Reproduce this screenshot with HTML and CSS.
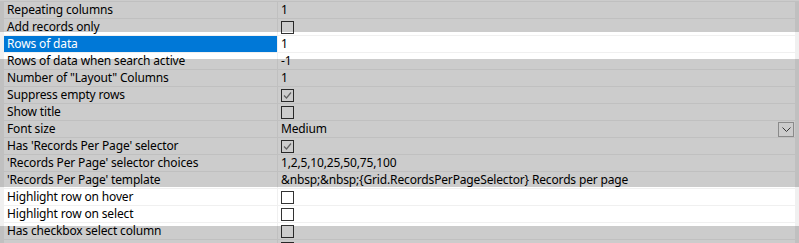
FILE: index.html
```html
<!DOCTYPE html>
<html lang="en">
<head>
  <meta charset="UTF-8" />
  <title>Grid properties</title>
  <link rel="stylesheet" href="styles.css">
</head>
<body>
  <div class="grid">
    <div class="row"><div class="name">Repeating columns</div><div class="value">1</div></div>
    <div class="row"><div class="name">Add records only</div><div class="value"><span class="box"></span></div></div>
    <div class="row selected"><div class="name">Rows of data</div><div class="value">1</div></div>
    <div class="row"><div class="name">Rows of data when search active</div><div class="value">-1</div></div>
    <div class="row"><div class="name">Number of "Layout" Columns</div><div class="value">1</div></div>
    <div class="row"><div class="name">Suppress empty rows</div><div class="value">
      <svg class="box checked" width="13" height="13" viewBox="0 0 13 13"><polyline points="3,6.5 5.5,9 10,3.5" fill="none" stroke="#7a7a7a" stroke-width="1.2"/></svg>
    </div></div>
    <div class="row"><div class="name">Show title</div><div class="value"><span class="box"></span></div></div>
    <div class="row"><div class="name">Font size</div><div class="value">Medium
      <span class="drop"><svg width="9" height="5" viewBox="0 0 9 5"><polyline points="0.5,0.5 4.5,4.5 8.5,0.5" fill="none" stroke="#444" stroke-width="1"/></svg></span>
    </div></div>
    <div class="row"><div class="name">Has 'Records Per Page' selector</div><div class="value">
      <svg class="box checked" width="13" height="13" viewBox="0 0 13 13"><polyline points="3,6.5 5.5,9 10,3.5" fill="none" stroke="#7a7a7a" stroke-width="1.2"/></svg>
    </div></div>
    <div class="row"><div class="name">'Records Per Page' selector choices</div><div class="value">1,2,5,10,25,50,75,100</div></div>
    <div class="row"><div class="name">'Records Per Page' template</div><div class="value">&amp;nbsp;&amp;nbsp;{Grid.RecordsPerPageSelector} Records per page</div></div>
    <div class="row"><div class="name">Highlight row on hover</div><div class="value"><span class="box"></span></div></div>
    <div class="row"><div class="name">Highlight row on select</div><div class="value"><span class="box"></span></div></div>
    <div class="row"><div class="name">Has checkbox select column</div><div class="value"><span class="box"></span></div></div>
    <div class="row"><div class="name"></div><div class="value"><span class="box"></span></div></div>
  </div>

  <!-- dimmed areas, the two bright bands stay uncovered -->
  <div class="shade shade-top"></div>
  <div class="shade shade-mid"></div>
  <div class="shade shade-bot"></div>
</body>
</html>
```

FILE: styles.css
```css
body { margin: 0; background: #fff; font-family: "Noto Sans", "Open Sans", sans-serif; font-size: 12px; letter-spacing: -0.15px; color: #000; overflow: hidden; height: 243px; position: relative; }
.grid { margin-top: 1px; border-top: 1px solid #f0f0f0; border-left: 4px solid #f0f0f0; border-right: 4px solid #f0f0f0; }
.row { display: flex; height: 17px; border-bottom: 1px solid #f0f0f0; box-sizing: border-box; line-height: 16px; }
.name { width: 274px; flex: none; box-sizing: border-box; padding-left: 3px; border-right: 1px solid #f0f0f0; white-space: nowrap; overflow: hidden; }
.value { flex: 1; display: flex; align-items: center; padding-left: 3px; padding-right: 1px; white-space: nowrap; }
.row.selected .name { background: #0078d7; color: #fff; }
.box { display: block; width: 13px; height: 13px; box-sizing: border-box; border: 1px solid #333; background: #fff; }
svg.box { border: none; outline: 1px solid #333; outline-offset: -1px; }
.drop { margin-left: auto; width: 16px; height: 15px; box-sizing: border-box; border: 1px solid #adadad; display: flex; align-items: center; justify-content: center; }
.shade { position: absolute; left: 0; width: 799px; background: rgba(0, 0, 0, 0.2); }
.shade-top { top: 0; height: 32px; }
.shade-mid { top: 59px; height: 128px; }
.shade-bot { top: 226px; height: 17px; }
```
